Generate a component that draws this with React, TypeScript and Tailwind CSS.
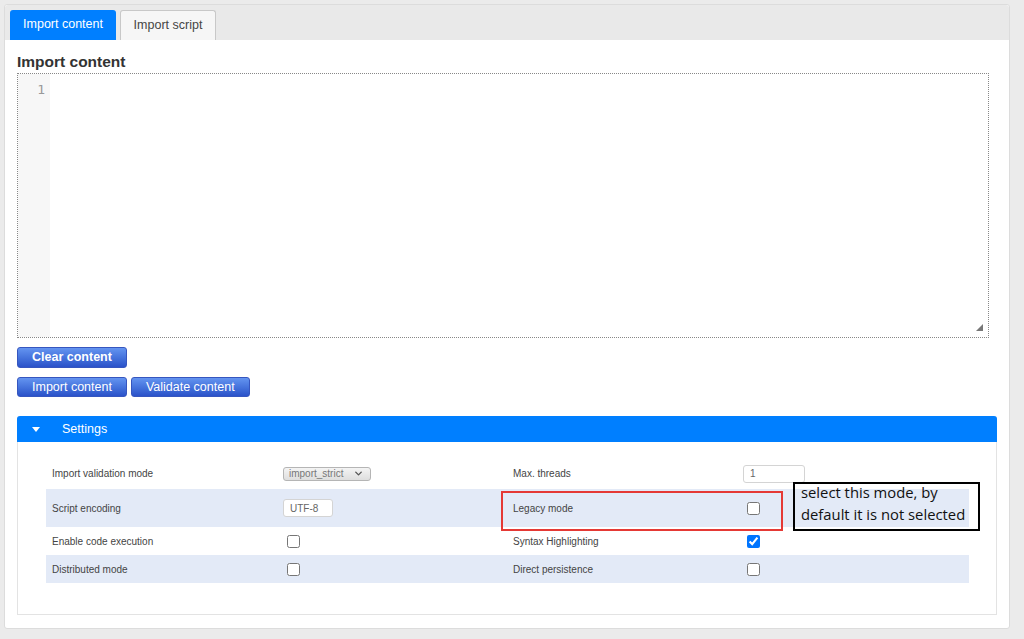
import React from "react";
import { ChevronDown } from "lucide-react";

type Row = {
  label: string;
  control: React.ReactNode;
  label2: string;
  control2: React.ReactNode;
  shaded?: boolean;
  h: string;
};

function Check({ checked = false }: { checked?: boolean }) {
  return (
    <input
      type="checkbox"
      defaultChecked={checked}
      className="ml-[4px] h-[13px] w-[13px] accent-[#0075ff]"
    />
  );
}

function TextBox({ value, w }: { value: string; w: string }) {
  return (
    <div
      className={`${w} flex h-[18px] items-center rounded-[3px] border border-[#d4d4d4] bg-white pl-[6px] text-[10px] text-[#666]`}
    >
      {value}
    </div>
  );
}

function Btn({
  children,
  bold,
  h = "h-[20px]",
}: {
  children: React.ReactNode;
  bold?: boolean;
  h?: string;
}) {
  return (
    <button
      className={`${h} rounded-[3px] border border-[#3656bf] bg-gradient-to-b from-[#6494f0] to-[#2b52c9] px-[14px] text-[12.5px] leading-none text-white ${
        bold ? "font-bold" : ""
      }`}
    >
      {children}
    </button>
  );
}

export default function App() {
  const rows: Row[] = [
    {
      label: "Import validation mode",
      control: (
        <div className="flex h-[14px] w-[88px] items-center justify-between rounded-[3px] border border-[#b5b5b5] bg-gradient-to-b from-[#f4f4f4] to-[#dedede] pl-[5px] pr-[6px] text-[10px] text-[#777]">
          <span className="leading-none">import_strict</span>
          <ChevronDown size={11} strokeWidth={3} className="text-[#555]" />
        </div>
      ),
      label2: "Max. threads",
      control2: <TextBox value="1" w="w-[62px]" />,
      h: "h-[31px]",
    },
    {
      label: "Script encoding",
      control: <TextBox value="UTF-8" w="w-[50px]" />,
      label2: "Legacy mode",
      control2: <Check />,
      shaded: true,
      h: "h-[38px]",
    },
    {
      label: "Enable code execution",
      control: <Check />,
      label2: "Syntax Highlighting",
      control2: <Check checked />,
      h: "h-[28px]",
    },
    {
      label: "Distributed mode",
      control: <Check />,
      label2: "Direct persistence",
      control2: <Check />,
      shaded: true,
      h: "h-[28px]",
    },
  ];

  return (
    <div className="min-h-screen bg-[#ebebeb] p-[4px] font-['Liberation_Sans',Arial,sans-serif] text-[#333]">
      <div className="h-[625px] w-[1006px] rounded-[3px] border border-[#dcdcdc] bg-white">
        {/* tab strip */}
        <div className="flex h-[35px] items-end gap-[4px] rounded-t-[3px] bg-[#e9e9e9] pl-[5px]">
          <div className="flex h-[30px] w-[106px] items-center justify-center rounded-t-[3px] bg-[#007fff] pb-px text-[12.5px] text-white">
            Import content
          </div>
          <div className="flex h-[30px] w-[96px] items-center justify-center rounded-t-[3px] border border-b-0 border-[#c8c8c8] bg-[#f6f6f6] pb-px text-[12.5px] text-[#454545]">
            Import script
          </div>
        </div>

        <div className="px-[12px] pt-[12px]">
          <h2 className="text-[15.5px] font-bold leading-[20px] text-[#333]">
            Import content
          </h2>

          {/* code editor */}
          <div className="relative mt-px flex h-[265px] w-[972px] border border-dotted border-[#888]">
            <div className="w-[32px] bg-[#f7f7f7] pr-[5px] pt-[6px] text-right font-['DejaVu_Sans_Mono',monospace] text-[13px] text-[#999]">
              1
            </div>
            <div className="flex-1" />
            <svg
              className="absolute bottom-[6px] right-[5px]"
              width="7"
              height="7"
              viewBox="0 0 7 7"
            >
              <path d="M7 0 L7 7 L0 7 Z" fill="#777" />
            </svg>
          </div>

          <div className="mt-[6px] flex flex-col gap-[9px]">
            <div>
              <Btn bold h="h-[21px]">
                Clear content
              </Btn>
            </div>
            <div className="flex gap-[4px]">
              <Btn>Import content</Btn>
              <Btn>Validate content</Btn>
            </div>
          </div>

          {/* settings panel */}
          <div className="mt-[19px] w-[980px] rounded-t-[3px] border border-t-0 border-[#e3e3e3]">
            <div className="-mx-px flex h-[26px] items-center rounded-t-[3px] bg-[#007fff] text-[12.5px] text-white">
              <svg className="ml-[15px]" width="8" height="5" viewBox="0 0 8 5">
                <path d="M0 0 H8 L4 5 Z" fill="white" />
              </svg>
              <span className="ml-[22px]">Settings</span>
            </div>

            <div className="px-[28px] pb-[31px] pt-[16px]">
              <div className="relative w-[923px] text-[10px] text-[#444]">
                {rows.map((r) => (
                  <div
                    key={r.label}
                    className={`grid ${r.h} grid-cols-[231px_230px_230px_1fr] items-center pl-[6px] ${
                      r.shaded ? "bg-[#e3eaf7]" : ""
                    }`}
                  >
                    <span>{r.label}</span>
                    <div className="flex items-center">{r.control}</div>
                    <span>{r.label2}</span>
                    <div className="flex items-center">{r.control2}</div>
                  </div>
                ))}

                {/* highlight on the legacy mode row */}
                <div className="absolute left-[455px] top-[33px] h-[40px] w-[282px] border-2 border-[#e53935]" />

                <div className="absolute left-[747px] top-[24px] h-[49px] w-[187px] border-2 border-black px-[6px] font-['Open_Sans',sans-serif] text-[14.8px] leading-[22px] text-[#111]">
                  <div className="-mt-[3px]">
                    select this mode, by
                    <br />
                    default it is not selected
                  </div>
                </div>
              </div>
            </div>
          </div>
        </div>
      </div>
    </div>
  );
}
